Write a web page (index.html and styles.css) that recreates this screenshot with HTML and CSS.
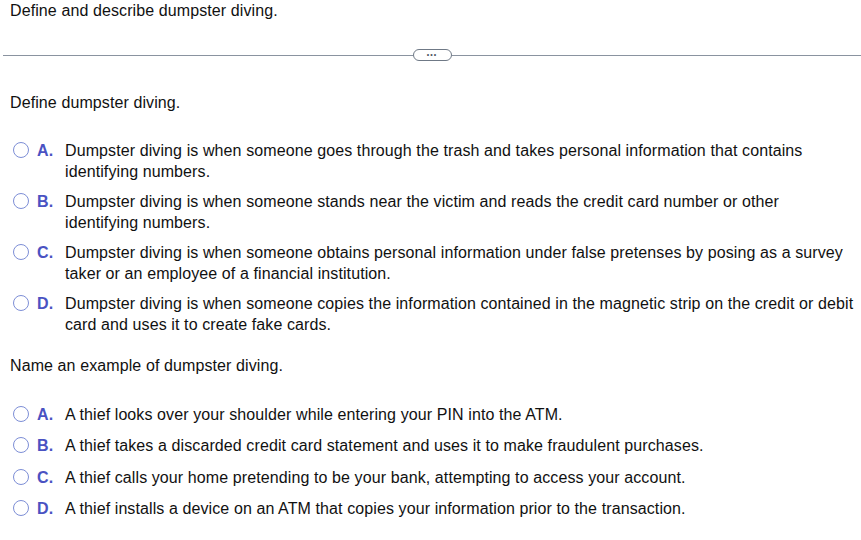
FILE: index.html
```html
<!DOCTYPE html>
<html>
<head>
<meta charset="utf-8">
<link rel="stylesheet" href="styles.css">
</head>
<body>
<div class="page">
  <p class="title">Define and describe dumpster diving.</p>
  <div class="divider">
    <span class="line"></span>
    <span class="pill"><span class="dots">&bull;&bull;&bull;</span></span>
    <span class="line"></span>
  </div>
  <p class="prompt first">Define dumpster diving.</p>
  <ul class="options long">
    <li><span class="radio"></span><span class="letter">A.</span><span class="text">Dumpster diving is when someone goes through the trash and takes personal information that contains identifying numbers.</span></li>
    <li><span class="radio"></span><span class="letter">B.</span><span class="text">Dumpster diving is when someone stands near the victim and reads the credit card number or other identifying numbers.</span></li>
    <li><span class="radio"></span><span class="letter">C.</span><span class="text">Dumpster diving is when someone obtains personal information under false pretenses by posing as a survey taker or an employee of a financial institution.</span></li>
    <li><span class="radio"></span><span class="letter">D.</span><span class="text">Dumpster diving is when someone copies the information contained in the magnetic strip on the credit or debit card and uses it to create fake cards.</span></li>
  </ul>
  <p class="prompt second">Name an example of dumpster diving.</p>
  <ul class="options short">
    <li><span class="radio"></span><span class="letter">A.</span><span class="text">A thief looks over your shoulder while entering your PIN into the ATM.</span></li>
    <li><span class="radio"></span><span class="letter">B.</span><span class="text">A thief takes a discarded credit card statement and uses it to make fraudulent purchases.</span></li>
    <li><span class="radio"></span><span class="letter">C.</span><span class="text">A thief calls your home pretending to be your bank, attempting to access your account.</span></li>
    <li><span class="radio"></span><span class="letter">D.</span><span class="text">A thief installs a device on an ATM that copies your information prior to the transaction.</span></li>
  </ul>
</div>
</body>
</html>
```
FILE: styles.css
```css
html, body {
  margin: 0;
  padding: 0;
  background: #ffffff;
}
.page {
  font-family: "Liberation Sans", Arial, sans-serif;
  font-size: 16px;
  line-height: 21px;
  letter-spacing: 0.1px;
  color: #111111;
}
p { margin: 0; }
.title {
  padding-left: 10px;
  padding-top: 0;
}
.divider {
  display: flex;
  align-items: center;
  margin-top: 28px;
  padding-left: 3px;
  height: 12px;
}
.line {
  flex: 1;
  height: 1px;
  background: #8a93a0;
}
.pill {
  width: 37px;
  height: 10px;
  border: 1px solid #6f7986;
  border-radius: 6px;
  display: flex;
  align-items: center;
  justify-content: center;
  flex: none;
}
.dots {
  font-size: 7px;
  line-height: 8px;
  letter-spacing: 1px;
  color: #4a5260;
}
.prompt {
  padding-left: 10px;
}
.prompt.first { margin-top: 31px; }
.options {
  list-style: none;
  margin: 0;
  padding: 0;
}
.options li {
  display: flex;
  align-items: flex-start;
}
.options.long { margin-top: 27px; }
.options.long li + li { margin-top: 9px; }
.options.short { margin-top: 28px; }
.options.short li + li { margin-top: 10.4px; }
.radio {
  flex: none;
  width: 14px;
  height: 14px;
  border: 1.5px solid #7d8ed6;
  border-radius: 50%;
  margin-left: 13px;
  margin-top: 2px;
  box-sizing: content-box;
}
.letter {
  flex: none;
  width: 28px;
  margin-left: 8px;
  font-weight: bold;
  color: #4a52c2;
}
.text {
  flex: 1;
  padding-right: 6px;
}
.prompt.second { margin-top: 20px; }
```
